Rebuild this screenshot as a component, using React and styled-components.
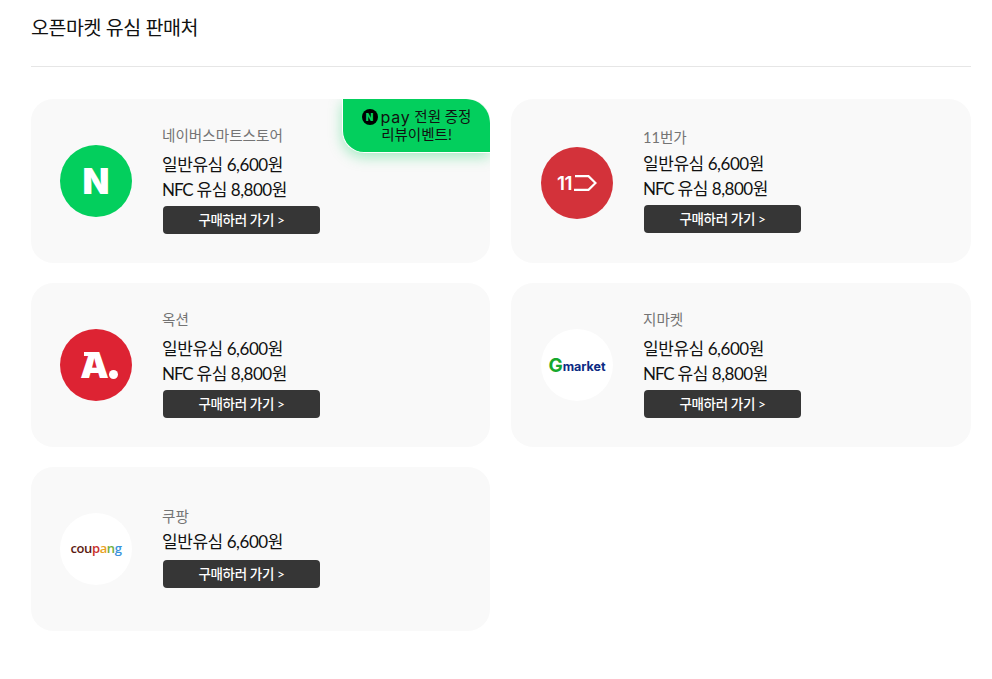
import React from "react";
import styled, { createGlobalStyle } from "styled-components";

const stores = [
  { id: "naver", name: "네이버스마트스토어", nfc: true, event: true, nameGap: 6, bottom: 3 },
  { id: "eleven", name: "11번가", nfc: true, nameGap: 3, bottom: 2, logoDrop: 4 },
  { id: "auction", name: "옥션", nfc: true, nameGap: 6, bottom: 3 },
  { id: "gmarket", name: "지마켓", nfc: true, nameGap: 6, bottom: 3 },
  { id: "coupang", name: "쿠팡", nfc: false, nameGap: 2, buttonGap: 6, bottom: 4 },
];

const StoreLogo = ({ id, drop }) => {
  if (id === "naver") {
    return (
      <LogoCircle $bg="#03cf5d">
        <NaverLetter>N</NaverLetter>
      </LogoCircle>
    );
  }
  if (id === "eleven") {
    return (
      <LogoCircle $bg="#d3323a" $drop={drop}>
        <ElevenText>11</ElevenText>
        <svg width="24" height="16" viewBox="0 0 24 16">
          <path d="M2 1.2H15.5L22.5 8L15.5 14.8H1" fill="none" stroke="#fff" strokeWidth="2.2" />
        </svg>
      </LogoCircle>
    );
  }
  if (id === "auction") {
    return (
      <LogoCircle $bg="#dd2333">
        <AuctionLetter>A</AuctionLetter>
        <AuctionDot />
      </LogoCircle>
    );
  }
  if (id === "gmarket") {
    return (
      <LogoCircle $bg="#fff">
        <GmarketG>G</GmarketG>
        <GmarketText>market</GmarketText>
      </LogoCircle>
    );
  }
  return (
    <LogoCircle $bg="#fff">
      <CoupangText>
        <span style={{ color: "#5b1a12" }}>cou</span>
        <span style={{ color: "#c8302b" }}>p</span>
        <span style={{ color: "#e8a21f" }}>a</span>
        <span style={{ color: "#6fae3c" }}>n</span>
        <span style={{ color: "#3a93dc" }}>g</span>
      </CoupangText>
    </LogoCircle>
  );
};

const App = () => {
  return (
    <Page>
      <GlobalStyle />
      <Title>오픈마켓 유심 판매처</Title>
      <Grid>
        {stores.map((store) => (
          <Card key={store.id}>
            <StoreLogo id={store.id} drop={store.logoDrop} />
            <Info $bottom={store.bottom}>
              <StoreName $gap={store.nameGap}>{store.name}</StoreName>
              <Price>일반유심 6,600원</Price>
              {store.nfc && (
                <Price>
                  <NfcLabel>NFC</NfcLabel> 유심 8,800원
                </Price>
              )}
              <BuyButton $gap={store.buttonGap}>구매하러 가기 &gt;</BuyButton>
            </Info>
            {store.event && (
              <EventBadge>
                <BadgeLine>
                  <PayMark>N</PayMark>
                  <PayWord>pay</PayWord> 전원 증정
                </BadgeLine>
                <BadgeLine>리뷰이벤트!</BadgeLine>
              </EventBadge>
            )}
          </Card>
        ))}
      </Grid>
    </Page>
  );
};

const GlobalStyle = createGlobalStyle`
  html, body {
    margin: 0;
    background: #fff;
  }
  body {
    font-family: Lato, "Noto Sans CJK KR", sans-serif;
    color: #111;
  }
`;

const Page = styled.div`
  width: 940px;
  margin-left: 31px;
`;

const Title = styled.h2`
  margin: 0;
  height: 38px;
  padding: 14px 0;
  border-bottom: 1px solid #e6e6e6;
  font-size: 19.5px;
  line-height: 28px;
  font-weight: 400;
  letter-spacing: -0.4px;
  color: #111;
`;

const Grid = styled.div`
  display: grid;
  grid-template-columns: 459px 460px;
  grid-auto-rows: 164px;
  column-gap: 21px;
  row-gap: 20px;
  margin-top: 32px;
`;

const Card = styled.div`
  position: relative;
  display: flex;
  align-items: center;
  gap: 31px;
  padding-left: 29px;
  background: #f9f9f9;
  border-radius: 22px;
  overflow: hidden;

  &:nth-child(even) {
    padding-left: 30px;
  }
`;

const LogoCircle = styled.div`
  flex: none;
  display: flex;
  align-items: center;
  justify-content: center;
  width: 72px;
  height: 72px;
  margin-top: ${(props) => props.$drop || 0}px;
  border-radius: 50%;
  background: ${(props) => props.$bg};
`;

const NaverLetter = styled.span`
  font-family: Inter, sans-serif;
  font-size: 35px;
  line-height: 1;
  font-weight: 900;
  color: #fff;
`;

const AuctionLetter = styled.span`
  position: relative;
  font-family: Inter, sans-serif;
  font-size: 36px;
  line-height: 1;
  font-weight: 900;
  color: #fff;
  margin-left: 6px;

  &::before {
    content: "";
    position: absolute;
    top: 5px;
    left: 4px;
    width: 12px;
    height: 4px;
    background: #fff;
  }
`;

const AuctionDot = styled.span`
  width: 9px;
  height: 9px;
  margin-top: 18px;
  border-radius: 50%;
  background: #fff;
`;

const ElevenText = styled.span`
  font-family: Inter, sans-serif;
  font-size: 19px;
  font-weight: 600;
  color: #fff;
  letter-spacing: -0.5px;
  margin-right: 1px;
`;

const GmarketG = styled.span`
  font-family: Inter, sans-serif;
  font-size: 19px;
  line-height: 1;
  font-weight: 700;
  color: #16a82c;
`;

const GmarketText = styled.span`
  font-family: Inter, sans-serif;
  font-size: 12.5px;
  font-weight: 700;
  color: #0b2a83;
  letter-spacing: 0;
  margin-top: 3px;
`;

const CoupangText = styled.span`
  font-family: "Open Sans", sans-serif;
  font-size: 13px;
  font-weight: 600;
  letter-spacing: -0.4px;
  margin-bottom: 3px;
`;

const Info = styled.div`
  display: flex;
  flex-direction: column;
  align-items: flex-start;
  padding-bottom: ${(props) => props.$bottom}px;
`;

const StoreName = styled.div`
  margin-left: -1px;
  padding-top: 1px;
  font-size: 14.6px;
  line-height: 20px;
  color: #747474;
  margin-bottom: ${(props) => props.$gap}px;
`;

const Price = styled.div`
  font-size: 17px;
  line-height: 25px;
  margin-left: -1px;
  color: #111;
  letter-spacing: -0.45px;
`;

const NfcLabel = styled.span`
  letter-spacing: -1.1px;
`;

const BuyButton = styled.div`
  width: 157px;
  height: 28px;
  margin-top: ${(props) => props.$gap || 4}px;
  border-radius: 4px;
  background: #363636;
  color: #fff;
  font-size: 13.5px;
  line-height: 28px;
  font-weight: 500;
  text-align: center;
  letter-spacing: -0.35px;
`;

const EventBadge = styled.div`
  position: absolute;
  top: 0;
  right: 0;
  width: 148px;
  height: 54px;
  box-sizing: border-box;
  padding-top: 9px;
  background: #03cf5d;
  border-bottom: 1px solid #fff;
  border-left: 1px solid #fff;
  border-radius: 0 24px 0 22px;
  box-shadow: 0 4px 14px rgba(3, 207, 93, 0.35);
  color: #111;
  font-size: 14.5px;
  line-height: 18px;
  font-weight: 400;
`;

const BadgeLine = styled.div`
  display: flex;
  align-items: center;
  justify-content: center;
  white-space: pre;
`;

const PayMark = styled.span`
  display: inline-flex;
  align-items: center;
  justify-content: center;
  width: 16px;
  height: 16px;
  margin-right: 3px;
  border-radius: 50%;
  background: #000;
  color: #03cf5d;
  font-family: Inter, sans-serif;
  font-size: 10px;
  font-weight: 900;
`;

const PayWord = styled.span`
  font-family: Inter, sans-serif;
  font-size: 16px;
  font-weight: 400;
  letter-spacing: 0.8px;
`;

export default App;
